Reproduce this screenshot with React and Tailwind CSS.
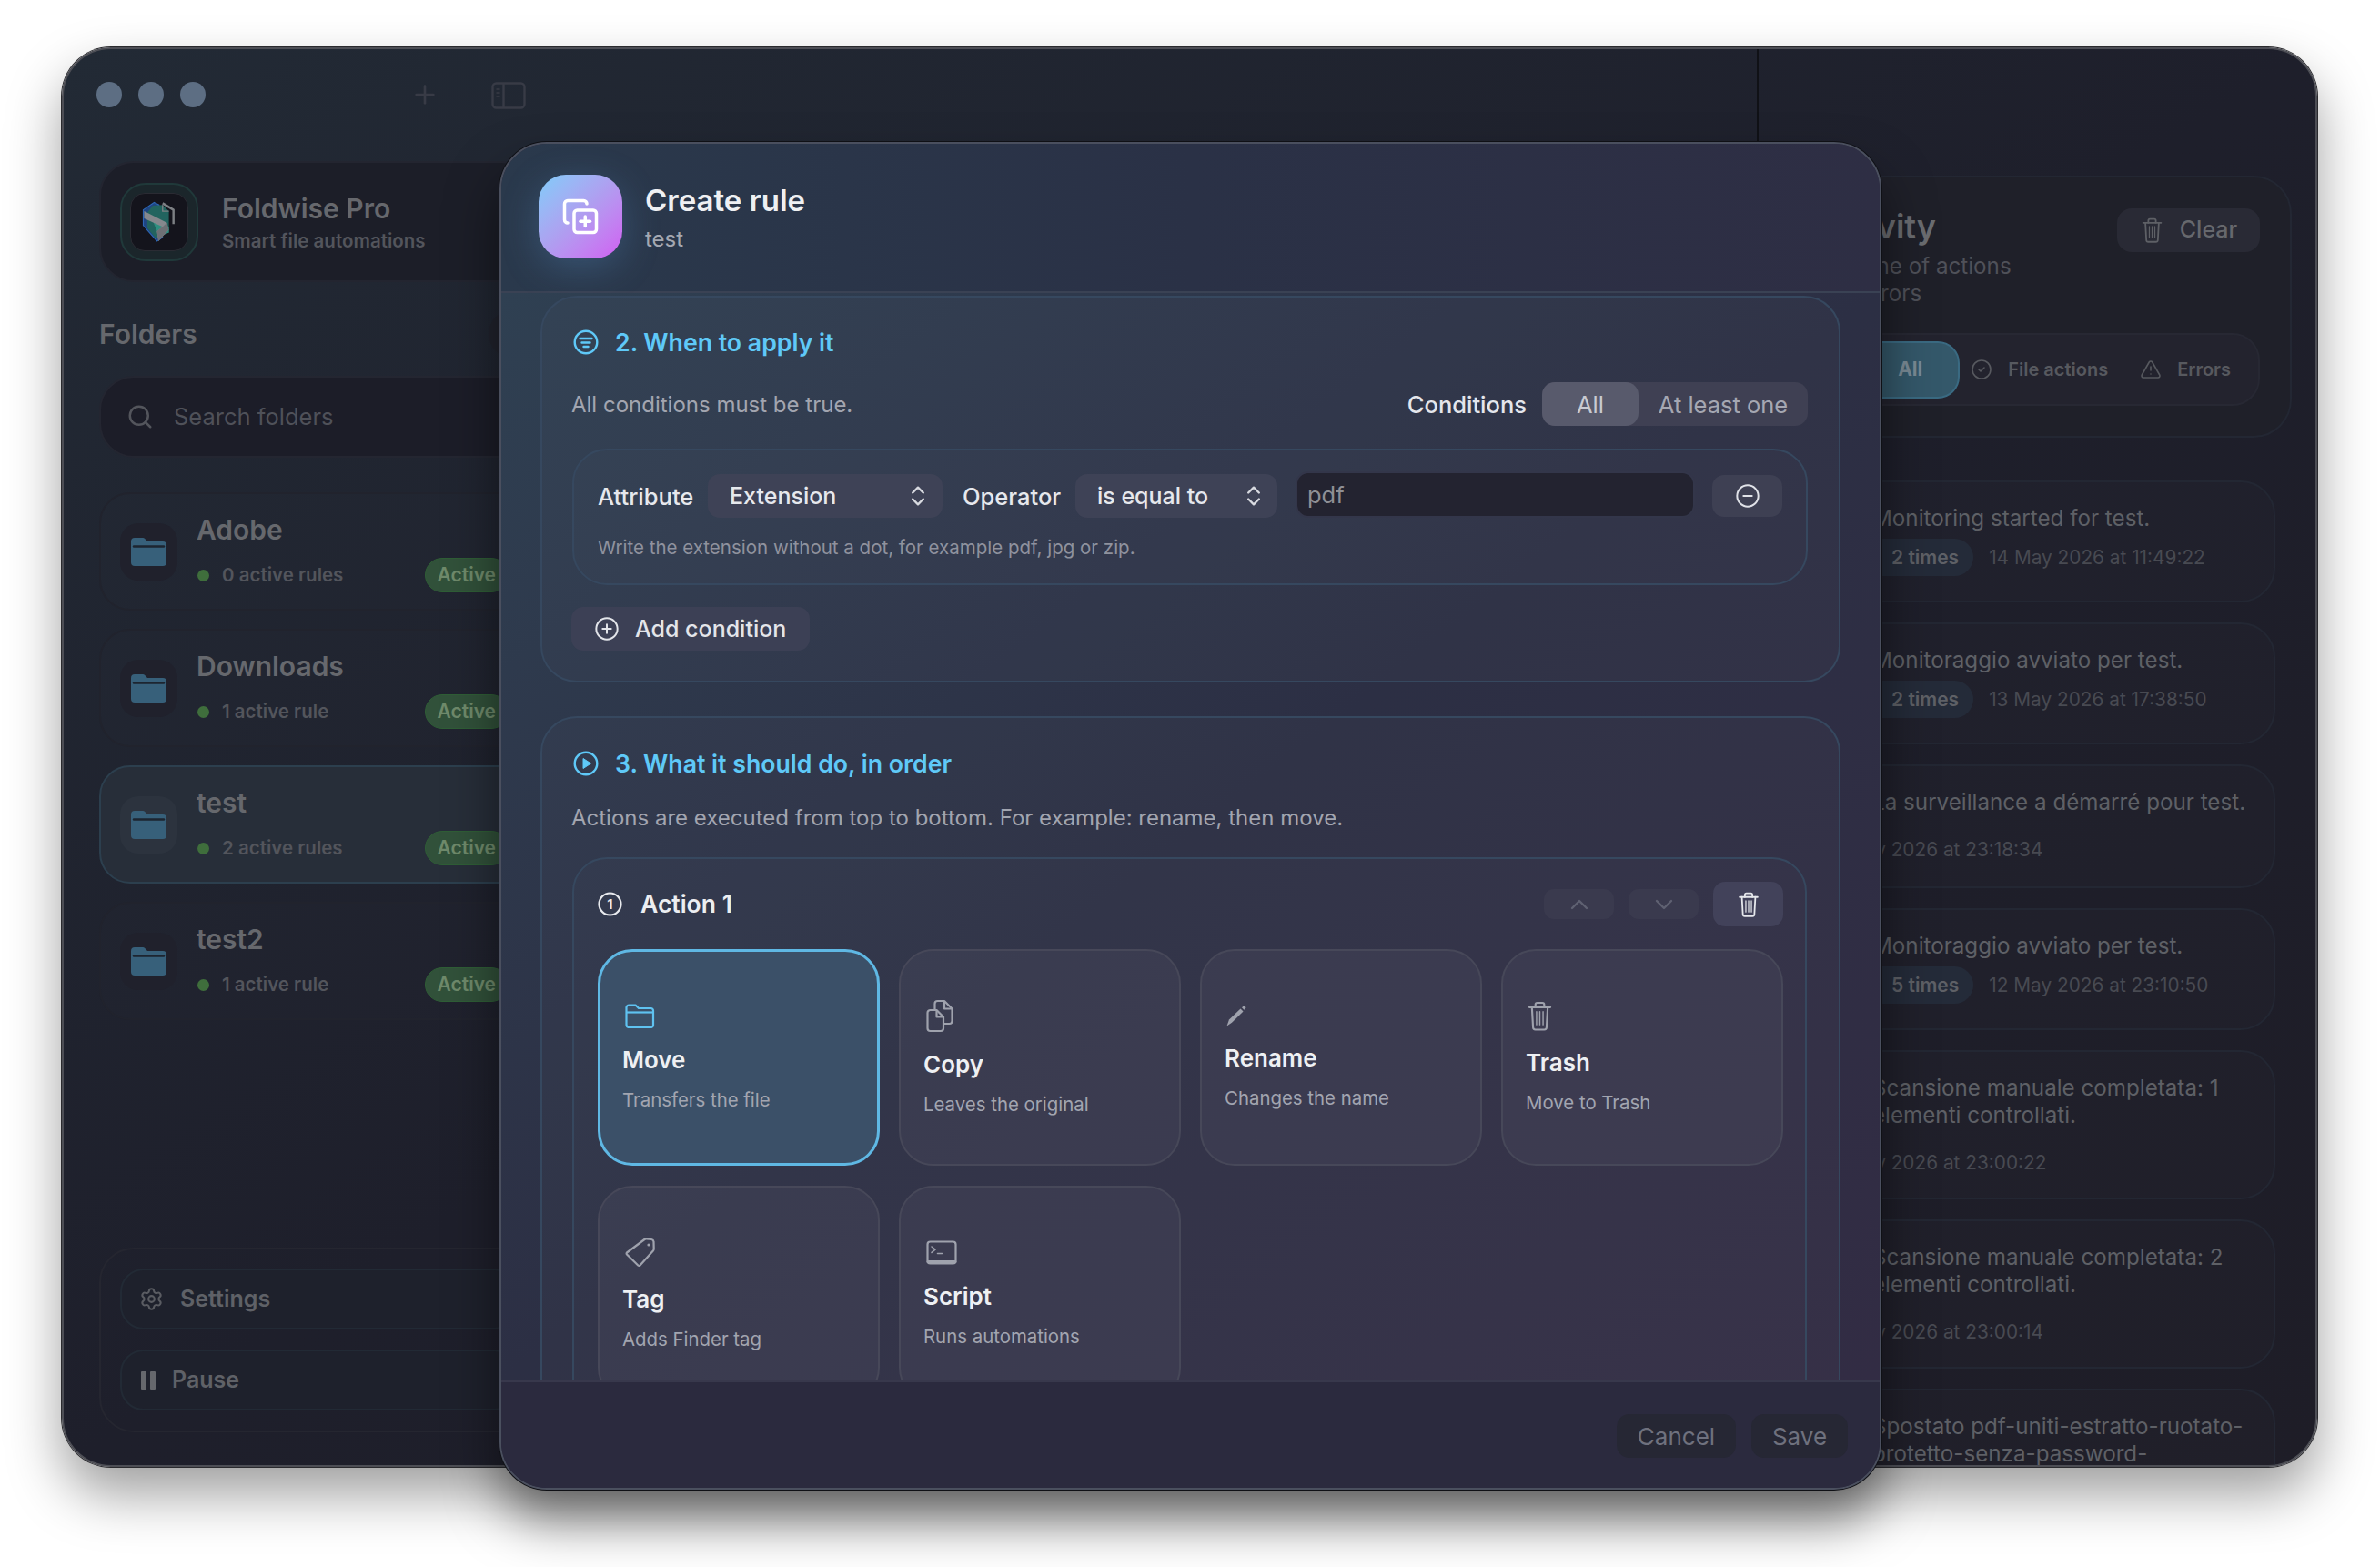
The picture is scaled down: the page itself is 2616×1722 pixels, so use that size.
import React from "react";
import {
  ChevronDown,
  ChevronUp,
  ChevronsUpDown,
  CircleCheck,
  CircleMinus,
  CirclePlus,
  CopyPlus,
  Plus,
  Search,
  Settings,
  TriangleAlert,
} from "lucide-react";

const TrashIcon = ({ className }) => (
  <svg viewBox="0 0 28 34" fill="none" stroke="currentColor" strokeWidth="2.2" strokeLinecap="round" className={className}>
    <path d="M2 7h24" />
    <path d="M9 7V4a2 2 0 0 1 2-2h6a2 2 0 0 1 2 2v3" />
    <path d="M5 7l1.3 23a2.6 2.6 0 0 0 2.6 2.5h10.2a2.6 2.6 0 0 0 2.6-2.5L23 7" />
    <path d="M10.3 12v15M14 12v15M17.7 12v15" strokeWidth="1.5" />
  </svg>
);

const FolderLine = ({ className }) => (
  <svg viewBox="0 0 33 27" fill="none" stroke="currentColor" strokeWidth="2.2" strokeLinejoin="round" className={className}>
    <path d="M1.5 5a3 3 0 0 1 3-3.5h7l3.5 3.5h13.5a2.5 2.5 0 0 1 2.5 2.5v16a2.5 2.5 0 0 1-2.5 2.5h-24a3 3 0 0 1-3-3z" />
    <path d="M2 9.5h29" />
  </svg>
);

const CopyDocs = ({ className }) => (
  <svg viewBox="0 0 30 37" fill="none" stroke="currentColor" strokeWidth="2.2" strokeLinejoin="round" className={className}>
    <path d="M1.5 15a3 3 0 0 1 3-3h7l7.5 7.5V32a3 3 0 0 1-3 3H4.5a3 3 0 0 1-3-3z" />
    <path d="M11.5 12v7.5H19" />
    <path d="M9.5 12V5a3 3 0 0 1 3-3h7.5l8.5 8.5V24a3 3 0 0 1-3 3H19" />
    <path d="M20 2v8.5h8.5" />
  </svg>
);

const PencilIcon = ({ className }) => (
  <svg viewBox="0 0 23 23" fill="currentColor" className={className}>
    <path d="M0.5 22.5L3 15.5L15.5 3.5L18.5 6.5L6 18.8z" />
    <path d="M17 2.2L18.6 0.7a1 1 0 0 1 1.5 0l.9.9a1 1 0 0 1 0 1.5L19.5 4.8z" />
  </svg>
);

const TagIcon = ({ className }) => (
  <svg viewBox="0 0 33 33" fill="none" stroke="currentColor" strokeWidth="2.2" strokeLinejoin="round" className={className}>
    <path d="M2 16.5L21.5 2a3 3 0 0 1 2-.5l5.5.5a3 3 0 0 1 2.5 2.5l.2 8a3 3 0 0 1-.8 2L16.5 30.5a1.5 1.5 0 0 1-2.2 0L2 18.5a1.4 1.4 0 0 1 0-2z" />
    <circle cx="26" cy="8" r="1.6" fill="currentColor" stroke="none" />
  </svg>
);

const TerminalIcon = ({ className }) => (
  <svg viewBox="0 0 34 27" fill="none" stroke="currentColor" strokeWidth="2.2" strokeLinecap="round" strokeLinejoin="round" className={className}>
    <rect x="1.5" y="1.5" width="31" height="24" rx="3" />
    <path d="M2 23.5h30" strokeWidth="3" />
    <path d="M6 7l4 3.2-4 3.2M12.5 14.5h5" strokeWidth="1.6" />
  </svg>
);

const FilledFolder = () => (
  <svg viewBox="0 0 39 31" className="w-[39px] h-[31px]">
    <path d="M0 4a4 4 0 0 1 4-4h9a3 3 0 0 1 2.2 1L18 4h17a4 4 0 0 1 4 4v19a4 4 0 0 1-4 4H4a4 4 0 0 1-4-4z" fill="#37607a" />
    <path d="M3 9.5h33" stroke="#1d2530" strokeWidth="2.4" strokeLinecap="round" />
  </svg>
);

const FilterCircle = () => (
  <svg viewBox="0 0 28 28" fill="none" stroke="#5fc9f8" strokeWidth="2.4" strokeLinecap="round" className="w-[28px] h-[28px]">
    <circle cx="14" cy="14" r="12.3" />
    <path d="M7.5 10h13M9.5 14.5h9M11.5 19h5" />
  </svg>
);

const PlayCircle = () => (
  <svg viewBox="0 0 28 28" fill="none" stroke="#5fc9f8" strokeWidth="2.4" className="w-[28px] h-[28px]">
    <circle cx="14" cy="14" r="12.3" />
    <path d="M11 8.5v11l8.5-5.5z" fill="#5fc9f8" stroke="#5fc9f8" strokeWidth="1" strokeLinejoin="round" />
  </svg>
);

const NumberCircle = () => (
  <svg viewBox="0 0 27 27" className="w-[27px] h-[27px]">
    <circle cx="13.5" cy="13.5" r="12" fill="none" stroke="#e8eaee" strokeWidth="2.2" />
    <text x="13.5" y="19" textAnchor="middle" fontSize="15" fontWeight="600" fill="#e8eaee" fontFamily="Inter">1</text>
  </svg>
);

const PanelIcon = () => (
  <svg viewBox="0 0 38 30" fill="none" stroke="#383b46" strokeWidth="2.4" className="w-[38px] h-[30px] ml-[57px]">
    <rect x="1.5" y="1.5" width="35" height="27" rx="4" />
    <path d="M13.5 2v26" />
    <path d="M5.5 8h4M5.5 12h4M5.5 16h4" strokeWidth="1.6" />
  </svg>
);

const AppLogo = () => (
  <svg viewBox="0 0 64 64" className="w-[60px] h-[60px]">
    <path d="M26 9L13.3 17.7V36L29.3 54.3L36 50L20 34V20L32 12z" fill="#1f4682" stroke="#2d66b5" strokeWidth="1.2" strokeLinejoin="round" />
    <path d="M24.3 12.7L36 12L43.3 19.3V44.3L27.7 51L18 39V21z" fill="#22645f" />
    <path d="M25 32L43.3 38V44.3L32 49z" fill="#2f8f80" />
    <path d="M36 12v7.3h7.3" fill="none" stroke="#7d8084" strokeWidth="1.4" />
    <path d="M36 10L48.7 17.7V34.3" fill="none" stroke="#7d8084" strokeWidth="2.6" strokeLinejoin="round" />
    <path d="M14.3 19.3L41 32.7L43 41L31 54.3L29.3 42.7L36 37.7L14.3 27.7z" fill="#85888d" strokeLinejoin="round" />
    <path d="M29.3 42.7L36 37.7L41 32.7L43 41L31 54.3z" fill="#6d7075" />
  </svg>
);

const folders = [
  { name: "Adobe", rules: "0 active rules" },
  { name: "Downloads", rules: "1 active rule" },
  { name: "test", rules: "2 active rules", selected: true },
  { name: "test2", rules: "1 active rule" },
];

const FolderRow = ({ name, rules, selected }) => (
  <div
    className={`flex h-[130px] items-center gap-[21px] rounded-[34px] border-2 pl-[21px] pr-[28px] ${
      selected ? "border-[#2c3f4e] bg-[#272e39]" : "border-[#21232d] bg-[#ffffff02]"
    }`}
  >
    <div className={`flex h-[63px] w-[63px] shrink-0 items-center justify-center rounded-[20px] ${selected ? "bg-[#2c333e]" : "bg-[#20212c]"}`}>
      <FilledFolder />
    </div>
    <div className="flex h-full flex-1 flex-col pt-[19px]">
      <div className="text-[30px] font-semibold leading-[40px] text-[#66686d]">{name}</div>
      <div className="mt-[15px] flex h-[30px] items-center justify-between">
        <div className="flex items-center gap-[14px]">
          <span className="ml-[1px] h-[13px] w-[13px] rounded-full bg-[#3f6e3c]" />
          <span className="text-[20.5px] font-semibold text-[#53555c]">{rules}</span>
        </div>
        <span className="flex h-[38px] items-center rounded-full border border-[#2f5e36] bg-[#31513a] px-[13px] text-[21px] font-semibold text-[#6f8a6b]">
          Active
        </span>
      </div>
    </div>
  </div>
);

const Sidebar = () => (
  <div className="flex w-[530px] shrink-0 flex-col pb-[36px] pl-[39px]">
    <div className="flex h-[133px] w-[480px] items-center gap-[26px] rounded-[38px] border-2 border-[#232530] bg-[#1c1e28] pl-[21px]">
      <div className="flex h-[86px] w-[86px] shrink-0 items-center justify-center rounded-[28px] border-2 border-[#20393a] bg-[#1b262b]">
        <div className="flex h-[64px] w-[64px] items-center justify-center rounded-[16px] border border-[#2a2b33] bg-[#14141c]">
          <AppLogo />
        </div>
      </div>
      <div>
        <div className="text-[30px] font-semibold leading-[40px] text-[#66686d]">Foldwise Pro</div>
        <div className="mt-[2px] text-[20.5px] font-semibold leading-[28px] text-[#53555c]">Smart file automations</div>
      </div>
    </div>

    <div className="mt-[31px] flex h-[52px] w-[480px] items-center justify-between">
      <div className="text-[30px] font-semibold text-[#66686d]">Folders</div>
      <div className="h-[52px] w-[52px] rounded-full bg-[#21232d]" />
    </div>

    <div className="mt-[20px] flex h-[90px] w-[480px] items-center gap-[22px] rounded-[38px] border-2 border-[#242631] bg-[#1c1d28] pl-[28px]">
      <Search className="h-[30px] w-[30px] text-[#53555c]" strokeWidth={2} />
      <span className="text-[25.5px] text-[#4f5159]">Search folders</span>
    </div>

    <div className="mt-[38px] flex w-[480px] flex-col gap-[20px]">
      {folders.map((f) => (
        <FolderRow key={f.name} {...f} />
      ))}
    </div>

    <div className="mt-auto flex w-[480px] flex-col gap-[22px] rounded-[38px] border-2 border-[#252630] pb-[22px] pl-[21px] pr-[18px] pt-[21px]">
      <div className="flex h-[67px] items-center gap-[18px] rounded-[26px] border-2 border-[#222a35] bg-[#1e212c] pl-[19px]">
        <Settings className="h-[27px] w-[27px] text-[#5a5c62]" strokeWidth={1.8} />
        <span className="text-[25px] font-semibold text-[#5f6167]">Settings</span>
      </div>
      <div className="flex h-[67px] items-center gap-[18px] rounded-[26px] border-2 border-[#222a35] bg-[#1e212c] pl-[21px]">
        <div className="flex gap-[4px]">
          <span className="h-[20px] w-[6px] rounded-[1px] bg-[#66686d]" />
          <span className="h-[20px] w-[6px] rounded-[1px] bg-[#66686d]" />
        </div>
        <span className="text-[25px] font-semibold text-[#5f6167]">Pause</span>
      </div>
    </div>
  </div>
);

const logs = [
  { text: "Monitoring started for test.", times: "2 times", date: "14 May 2026 at 11:49:22" },
  { text: "Monitoraggio avviato per test.", times: "2 times", date: "13 May 2026 at 17:38:50" },
  { text: "La surveillance a démarré pour test.", date: "12 May 2026 at 23:18:34" },
  { text: "Monitoraggio avviato per test.", times: "5 times", date: "12 May 2026 at 23:10:50" },
  { text: "Scansione manuale completata: 1 elementi controllati.", date: "12 May 2026 at 23:00:22", wrap: true },
  { text: "Scansione manuale completata: 2 elementi controllati.", date: "12 May 2026 at 23:00:14", wrap: true },
  { text: "Spostato pdf-uniti-estratto-ruotato-protetto-senza-password-", date: "12 May 2026 at 22:58:40", wrap: true },
];

const LogItem = ({ text, times, date, wrap }) => (
  <div
    className={`w-[541px] shrink-0 rounded-[38px] border-2 border-[#232733] bg-[#ffffff03] pl-[96px] pr-[20px] pt-[25px] ${
      wrap ? "pb-[23px]" : times ? "pb-[27px]" : "pb-[25px]"
    }`}
  >
    <div className="text-[24.2px] leading-[30px] text-[#5e6066]">{text}</div>
    {times ? (
      <div className="-ml-[54px] mt-[7px] flex h-[41px] items-center gap-[17px]">
        <span className="flex h-[41px] items-center rounded-full bg-[#242b39] pl-[75px] pr-[16px] text-[21px] font-semibold text-[#5e6066]">
          {times}
        </span>
        <span className="text-[20.8px] text-[#484a52]">{date}</span>
      </div>
    ) : (
      <div className="-ml-[54px] mt-[22px] text-[20.8px] leading-[30px] text-[#484a52]">{date}</div>
    )}
  </div>
);

const ActivityPanel = () => (
  <div className="flex min-w-0 flex-1 flex-col pl-[27px] pr-[26px] pt-[139px]">
    <div className="w-[559px] rounded-[42px] border-2 border-[#232733] bg-[#1f2029] pb-[33px] pl-[32px] pr-[33px] pt-[32px]">
      <div className="flex items-start justify-between">
        <div>
          <div className="text-[36px] font-semibold leading-[44px] text-[#6a6c70]">Activity</div>
          <div className="mt-[7px] text-[24.2px] leading-[30px] text-[#4f5159]">
            Timeline of actions
            <br />
            and errors
          </div>
        </div>
        <div className="mt-[2px] flex h-[48px] w-[157px] items-center justify-center gap-[19px] rounded-[16px] bg-[#292a35] pl-[2px]">
          <TrashIcon className="h-[28px] w-[23px] text-[#5e6066]" />
          <span className="text-[25px] font-medium text-[#66686d]">Clear</span>
        </div>
      </div>
      <div className="mt-[28px] flex h-[80px] items-center justify-end whitespace-nowrap rounded-[30px] border-2 border-[#272833] bg-[#23232e] pr-[30px]">
        <div className="flex h-[63px] w-[190px] shrink-0 items-center justify-end rounded-[24px] border-2 border-[#3a6a82] bg-[#34586a] pr-[39px] text-[21px] font-bold text-[#7a8a94]">
          All
        </div>
        <CircleCheck className="ml-[12px] h-[24px] w-[24px] shrink-0 text-[#57595f]" strokeWidth={1.6} />
        <span className="ml-[17px] text-[20px] font-semibold text-[#57595f]">File actions</span>
        <TriangleAlert className="ml-[35px] h-[24px] w-[24px] shrink-0 text-[#57595f]" strokeWidth={1.6} />
        <span className="ml-[17px] text-[20px] font-semibold text-[#57595f]">Errors</span>
      </div>
    </div>
    <div className="mt-[47px] flex flex-col gap-[22px]">
      {logs.map((l, i) => (
        <LogItem key={i} {...l} />
      ))}
    </div>
  </div>
);

const SelectBox = ({ label, w, pad }) => (
  <div className={`relative flex h-[48px] items-center rounded-[13px] bg-[#3e4256] pl-[24px] pt-[2px] text-[25px] font-medium text-[#e6e8ed] ${w}`}>
    {label}
    <ChevronsUpDown className={`absolute top-[10px] h-[28px] w-[28px] text-[#d8dae0] ${pad}`} strokeWidth={2} />
  </div>
);

const options = [
  { title: "Move", sub: "Transfers the file", icon: <FolderLine className="ml-[3px] h-[27px] w-[33px] text-[#5fc2f0]" />, active: true },
  { title: "Copy", sub: "Leaves the original", icon: <CopyDocs className="ml-[3px] h-[37px] w-[30px] text-[#9fa2ad]" /> },
  { title: "Rename", sub: "Changes the name", icon: <PencilIcon className="ml-[2px] h-[23px] w-[23px] text-[#9fa2ad]" /> },
  { title: "Trash", sub: "Move to Trash", icon: <TrashIcon className="ml-[2px] h-[33px] w-[27px] text-[#9fa2ad]" /> },
  { title: "Tag", sub: "Adds Finder tag", icon: <TagIcon className="ml-[3px] h-[33px] w-[33px] text-[#9fa2ad]" /> },
  { title: "Script", sub: "Runs automations", icon: <TerminalIcon className="ml-[3px] h-[27px] w-[34px] text-[#9fa2ad]" /> },
];

const OptionCard = ({ title, sub, icon, active }) => (
  <div
    className={`flex h-[238px] flex-col justify-center rounded-[38px] ${
      active ? "border-[3px] border-[#5fb8e4] bg-[#3b5068] pl-[24px]" : "border-2 border-[#474859] bg-[#ffffff0a] pl-[25px]"
    }`}
  >
    {icon}
    <div className="mt-[19px] text-[26px] font-semibold leading-[32px] text-[#eef0f3]">{title}</div>
    <div className="mt-[15px] text-[20.4px] leading-[26px] text-[#a2a5b0]">{sub}</div>
  </div>
);

const RuleModal = () => (
  <div className="absolute left-[549px] top-[156px] flex h-[1481px] w-[1519px] flex-col overflow-hidden rounded-[52px] border-2 border-[#4a4f5e] bg-[#2b2a3e] shadow-[0_0_0_1px_#0f1015,0_34px_56px_rgba(0,0,0,0.5)]">
    <div className="flex h-[164px] shrink-0 items-center gap-[25px] border-b-2 border-[#3a4254] bg-linear-to-r from-[#2a394c] via-[#2a3146] to-[#2e2e44] pb-[3px] pl-[41px]">
      <div className="flex h-[92px] w-[92px] items-center justify-center rounded-[30px] bg-linear-to-br from-[#7ccdf9] via-[#b09df0] to-[#d05cf2] shadow-[0_10px_40px_rgba(100,170,240,0.25)]">
        <CopyPlus className="h-[42px] w-[42px] text-white" strokeWidth={2} />
      </div>
      <div>
        <div className="text-[33px] font-semibold leading-[44px] text-[#eef0f3]">Create rule</div>
        <div className="mt-[6px] text-[24px] leading-[30px] text-[#a4a8b2]">test</div>
      </div>
    </div>

    <div className="min-h-0 flex-1 overflow-hidden bg-linear-to-br from-[#2f4052] via-[#2c2f44] to-[#322c44] px-[43px] pt-[3px]">
      <div className="rounded-[40px] border-2 border-[#36485f] bg-[#ffffff05] pb-[33px] pl-[33px] pr-[34px] pt-[31px]">
        <div className="flex h-[36px] items-center gap-[18px] pl-[1px] text-[26.7px] font-semibold text-[#5fc9f8]">
          <FilterCircle />
          2. When to apply it
        </div>
        <div className="mt-[26px] flex h-[48px] items-center justify-between">
          <div className="-ml-px pt-[2px] text-[24px] text-[#a2a5b0]">All conditions must be true.</div>
          <div className="flex items-center gap-[17px]">
            <span className="pt-[2px] text-[25.5px] font-medium text-[#e4e6ec]">Conditions</span>
            <div className="flex h-[48px] w-[292px] items-center rounded-[14px] bg-[#3f4053] text-[25.5px]">
              <div className="flex h-[48px] w-[106px] items-center justify-center rounded-[14px] bg-[#585a6c] pt-[2px] text-[#c9cbd2]">All</div>
              <div className="flex-1 pt-[2px] text-center text-[#a5a7b2]">At least one</div>
            </div>
          </div>
        </div>

        <div className="mt-[25px] rounded-[38px] border-2 border-[#36485f] bg-[#ffffff03] pb-[25px] pl-[26px] pt-[23px]">
          <div className="flex h-[51px] items-end">
            <div className="flex h-[48px] w-[104px] items-center pt-[2px] text-[25.5px] font-medium text-[#e6e8ed]">Attribute</div>
            <div className="ml-[17px]">
              <SelectBox label="Extension" w="w-[258px]" pad="right-[13px]" />
            </div>
            <div className="ml-[22px] flex h-[48px] w-[107px] items-center pt-[2px] text-[25.5px] font-medium text-[#e6e8ed]">Operator</div>
            <div className="ml-[17px]">
              <SelectBox label="is equal to" w="w-[222px]" pad="right-[12px]" />
            </div>
            <div className="ml-[20px] flex h-[51px] w-[439px] items-center rounded-[14px] border-2 border-[#33364a] bg-[#232330] pl-[11px] pt-[2px] text-[25.5px] text-[#8e8f95]">
              pdf
            </div>
            <div className="mb-px ml-[19px] flex h-[46px] w-[77px] items-center justify-center rounded-[13px] bg-[#3e4053]">
              <CircleMinus className="h-[28px] w-[28px] text-[#e0e2e8]" strokeWidth={1.7} />
            </div>
          </div>
          <div className="mt-[19px] text-[20.5px] leading-[28px] text-[#8f929e]">Write the extension without a dot, for example pdf, jpg or zip.</div>
        </div>

        <div className="-ml-px mt-[24px] flex h-[48px] w-[262px] items-center gap-[17px] rounded-[13px] bg-[#3c4055] pl-[25px] pt-[2px] text-[25px] font-medium text-[#e3e5ea]">
          <CirclePlus className="-mt-[2px] h-[28px] w-[28px]" strokeWidth={1.7} />
          Add condition
        </div>
      </div>

      <div className="mt-[37px] rounded-[40px] border-2 border-[#36485f] bg-[#ffffff05] pl-[33px] pr-[35px] pt-[32px]">
        <div className="flex h-[36px] items-center gap-[18px] pl-[1px] text-[26.7px] font-semibold text-[#5fc9f8]">
          <PlayCircle />
          3. What it should do, in order
        </div>
        <div className="-ml-px mt-[25px] text-[24px] leading-[34px] text-[#a2a5b0]">Actions are executed from top to bottom. For example: rename, then move.</div>
        <div className="mt-[26px] rounded-[38px] border-2 border-[#36485f] bg-[#ffffff03] pb-[24px] pl-[26px] pr-[24px] pt-[25px]">
          <div className="flex h-[49px] items-center">
            <NumberCircle />
            <span className="ml-[20px] text-[26.5px] font-semibold text-[#eceef2]">Action 1</span>
            <div className="ml-auto flex items-center gap-[16px]">
              <div className="flex h-[33px] w-[77px] items-center justify-center rounded-[11px] bg-[#3a3a4e]">
                <ChevronUp className="h-[32px] w-[32px] text-[#5f6172]" strokeWidth={1.8} />
              </div>
              <div className="flex h-[33px] w-[77px] items-center justify-center rounded-[11px] bg-[#3a3a4e]">
                <ChevronDown className="h-[32px] w-[32px] text-[#5f6172]" strokeWidth={1.8} />
              </div>
              <div className="flex h-[49px] w-[77px] items-center justify-center rounded-[13px] bg-[#42425a]">
                <TrashIcon className="h-[28px] w-[24px] text-[#e6e8ec]" />
              </div>
            </div>
          </div>
          <div className="mt-[25px] grid grid-cols-4 gap-x-[21px] gap-y-[22px]">
            {options.map((o) => (
              <OptionCard key={o.title} {...o} />
            ))}
          </div>
        </div>
      </div>
    </div>

    <div className="flex h-[118px] shrink-0 justify-end gap-[17px] border-t-2 border-[#38384c] bg-[#2b2a3e] pr-[35px] pt-[35px]">
      <div className="flex h-[48px] w-[131px] items-center justify-center rounded-[14px] bg-[#262734] text-[26px] text-[#6f717e]">Cancel</div>
      <div className="flex h-[48px] w-[106px] items-center justify-center rounded-[14px] bg-[#262734] text-[26px] text-[#6f717e]">Save</div>
    </div>
  </div>
);

const App = () => {
  return (
    <div className="relative h-[1722px] w-[2616px] overflow-hidden bg-white pl-[68px] pt-[52px] font-[Inter]">
      <div className="flex h-[1560px] w-[2479px] overflow-hidden rounded-[54px] border-2 border-[#4d4e55] bg-linear-to-br from-[#222a35] via-[#1e1f2b] to-[#1e1d27] shadow-[0_0_0_1px_#2a2a2e,0_30px_60px_rgba(0,0,0,0.38)]">
        <div className="flex w-[1863px] shrink-0 flex-col border-r-2 border-[#101116]">
          <div className="flex h-[123px] shrink-0 items-start pl-[36px] pt-[36px]">
            <div className="flex gap-[18px]">
              <span className="h-[28px] w-[28px] rounded-full bg-[#5d6e83]" />
              <span className="h-[28px] w-[28px] rounded-full bg-[#5d6e83]" />
              <span className="h-[28px] w-[28px] rounded-full bg-[#5d6e83]" />
            </div>
            <Plus className="-mt-[2px] ml-[225px] h-[32px] w-[32px] text-[#383b46]" strokeWidth={2} />
            <PanelIcon />
          </div>
          <div className="flex min-h-0 flex-1">
            <Sidebar />
          </div>
        </div>
        <ActivityPanel />
      </div>
      <RuleModal />
    </div>
  );
};

export default App;
